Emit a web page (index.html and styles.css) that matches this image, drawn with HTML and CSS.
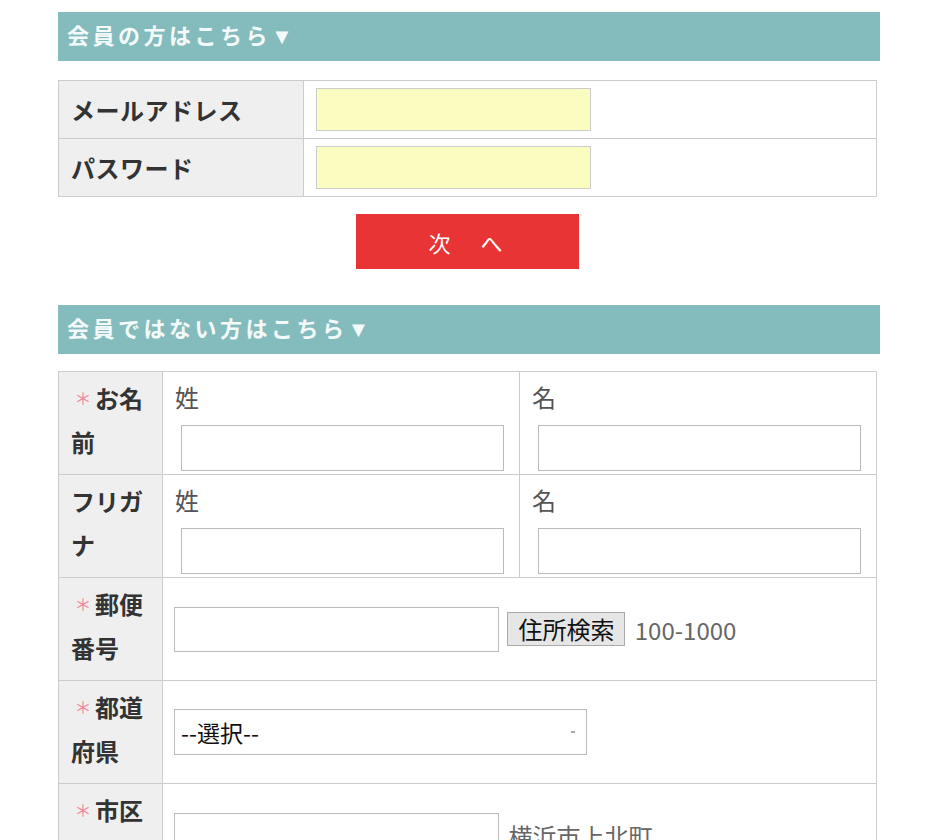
FILE: index.html
```html
<!DOCTYPE html>
<html>
<head>
    <meta charset="utf-8">
    <link rel="stylesheet" href="styles.css">
</head>
<body>
    <div class="container">
        <h2 class="section-title">会員の方はこちら▼</h2>
        <table class="login-table">
            <tr>
                <th>メールアドレス</th>
                <td><input type="text" class="input-login"></td>
            </tr>
            <tr>
                <th>パスワード</th>
                <td><input type="password" class="input-login"></td>
            </tr>
        </table>
        <div class="btn-area">
            <button type="button" class="btn-next">次　へ</button>
        </div>

        <h2 class="section-title title-guest">会員ではない方はこちら▼</h2>
        <table class="guest-table">
            <tr>
                <th><span class="req">＊</span>お名前</th>
                <td class="half">
                    <div class="sub-label">姓</div>
                    <input type="text" class="input-name">
                </td>
                <td class="half">
                    <div class="sub-label">名</div>
                    <input type="text" class="input-name">
                </td>
            </tr>
            <tr>
                <th>フリガナ</th>
                <td class="half">
                    <div class="sub-label">姓</div>
                    <input type="text" class="input-name">
                </td>
                <td class="half">
                    <div class="sub-label">名</div>
                    <input type="text" class="input-name">
                </td>
            </tr>
            <tr>
                <th><span class="req">＊</span>郵便番号</th>
                <td colspan="2" class="middle">
                    <input type="text" class="input-mid">
                    <button type="button" class="btn-search">住所検索</button>
                    <span class="example">100-1000</span>
                </td>
            </tr>
            <tr>
                <th><span class="req">＊</span>都道府県</th>
                <td colspan="2" class="middle">
                    <select class="select-pref">
                        <option>--選択--</option>
                    </select>
                </td>
            </tr>
            <tr>
                <th><span class="req">＊</span>市区町村</th>
                <td colspan="2" class="middle">
                    <input type="text" class="input-mid">
                    <span class="example">横浜市上北町</span>
                </td>
            </tr>
        </table>
    </div>
</body>
</html>
```

FILE: styles.css
```css
html {
    overflow: hidden;
}
body {
    margin: 0;
    padding-top: 12px;
    background-color: #ffffff;
    font-family: "Noto Sans CJK JP", sans-serif;
    font-size: 24px;
    color: #333;
}
.container {
    width: 822px;
    margin-left: 58px;
}
.section-title {
    margin: 0;
    height: 49px;
    line-height: 49px;
    padding-left: 9px;
    background-color: #84bcbd;
    color: #f4fafa;
    font-family: "Liberation Serif", "Noto Sans CJK JP", serif;
    font-size: 22px;
    font-weight: bold;
    letter-spacing: 3.5px;
}
.title-guest {
    margin-top: 36px;
}
table {
    width: 819px;
    border-collapse: collapse;
    font-size: 24px;
}
th, td {
    border: 1px solid #cccccc;
    padding: 0;
}
th {
    background-color: #efefef;
    text-align: left;
    font-weight: bold;
    color: #333;
}

/* login */
.login-table {
    margin-top: 19px;
}
.login-table tr {
    height: 58px;
}
.login-table th {
    width: 232px;
    padding-left: 12px;
    letter-spacing: 0.5px;
}
.login-table td {
    padding-left: 12px;
}
.input-login {
    display: block;
    width: 275px;
    height: 43px;
    box-sizing: border-box;
    border: 1px solid #cccccc;
    background-color: #fafcc0;
}
.btn-area {
    margin-top: 17px;
    padding-right: 3px;
    text-align: center;
}
.btn-next {
    width: 223px;
    height: 55px;
    border: none;
    background-color: #e83434;
    color: #ffffff;
    font-family: "Noto Sans CJK JP", sans-serif;
    font-size: 22px;
    letter-spacing: 4px;
}

/* guest */
.guest-table {
    margin-top: 17px;
}
.guest-table tr {
    height: 103px;
}
.guest-table th {
    width: 88px;
    padding: 4px 3px 0 12px;
    vertical-align: top;
    line-height: 44px;
}
.req {
    display: inline-block;
    width: 24px;
    text-align: center;
    vertical-align: top;
    color: #ef8a9a;
    font-size: 17px;
    font-weight: normal;
}
.guest-table td.half {
    vertical-align: top;
    padding: 7px 0 0 12px;
}
.sub-label {
    line-height: 36px;
    color: #555;
}
.input-name {
    display: block;
    width: 323px;
    height: 46px;
    margin: 10px 0 0 6px;
    box-sizing: border-box;
    border: 1px solid #bbbbbb;
}
.guest-table td.middle {
    padding-left: 11px;
    vertical-align: middle;
}
.input-mid {
    width: 325px;
    height: 45px;
    box-sizing: border-box;
    border: 1px solid #bbbbbb;
    vertical-align: middle;
}
.btn-search {
    height: 34px;
    margin-left: 3px;
    padding: 0 10px;
    border: 1px solid #aaaaaa;
    background-color: #e6e6e6;
    color: #111;
    font-family: "Noto Sans CJK JP", sans-serif;
    font-size: 24px;
    line-height: 30px;
    vertical-align: middle;
}
.example {
    margin-left: 4px;
    color: #666;
    vertical-align: middle;
}
.select-pref {
    width: 413px;
    height: 46px;
    padding-left: 6px;
    border: 1px solid #bbbbbb;
    background: #fff linear-gradient(#aaaaaa, #aaaaaa) no-repeat right 11px center / 4px 2px;
    appearance: none;
    -webkit-appearance: none;
    font-family: "Noto Sans CJK JP", sans-serif;
    font-size: 23px;
    color: #111;
}
```
